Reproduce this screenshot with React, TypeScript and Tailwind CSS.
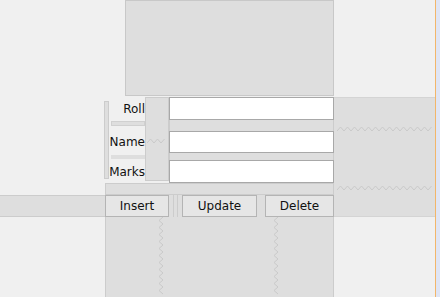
import React from 'react';

const GRAY = 'bg-[#dedede]';

function ZigH({ width }: { width: number }) {
  const pts: string[] = [];
  for (let x = 0, i = 0; x <= width; x += 3.5, i++) pts.push(`${x},${i % 2 ? 1 : 5}`);
  return (
    <svg width={width} height={6} className="block">
      <polyline points={pts.join(' ')} fill="none" stroke="#cacaca" strokeWidth="1" />
    </svg>
  );
}

function ZigV({ height }: { height: number }) {
  const pts: string[] = [];
  for (let y = 0, i = 0; y <= height; y += 3.5, i++) pts.push(`${i % 2 ? 1 : 5},${y}`);
  return (
    <svg width={6} height={height} className="block">
      <polyline points={pts.join(' ')} fill="none" stroke="#cacaca" strokeWidth="1" />
    </svg>
  );
}

function Field() {
  return <div className="h-full bg-white border border-[#a8a8a8]" />;
}

function Btn({ label, w }: { label: string; w: string }) {
  return (
    <div className={`${w} h-full flex items-center justify-center bg-[#e6e6e6] border border-[#b4b4b4]`}>
      {label}
    </div>
  );
}

export default function App() {
  return (
    <div
      className="flex w-[440px] h-[297px] bg-[#f0f0f0] text-[12px] text-[#111] overflow-hidden"
      style={{ fontFamily: '"DejaVu Sans", Tahoma, sans-serif' }}
    >
      <div className="w-[435px] flex flex-col">
        {/* top block */}
        <div className="h-[97px] flex">
          <div className="w-[125px]" />
          <div className={`w-[209px] h-[96px] ${GRAY} border border-[#c8c8c8]`} />
        </div>

        {/* form + buttons */}
        <div className="h-[120px] flex">
          <div className="w-[334px] flex flex-col">
            <div className="h-[86px] flex">
              <div className="w-[104px]" />
              <div className="w-[5px] py-[4px]">
                <div className={`h-full ${GRAY} border border-[#cccccc]`} />
              </div>
              <div className="w-[36px] flex flex-col">
                <div className="h-[23px] flex items-center justify-end">Roll</div>
                <div className="h-[11px] pt-[1px] pl-[2px]">
                  <div className={`h-[5px] ${GRAY} border border-[#d0d0d0]`} />
                </div>
                <div className="h-[22px] flex items-center justify-end">Name</div>
                <div className="h-[7px] pt-[2px] pl-[2px]">
                  <div className={`h-[4px] ${GRAY}`} />
                </div>
                <div className="h-[23px] flex items-center justify-end">Marks</div>
              </div>
              <div className={`w-[24px] h-[84px] ${GRAY} border border-[#cccccc] flex flex-col items-center pt-[40px]`}>
                <ZigH width={20} />
              </div>
              <div className="w-[165px] flex flex-col">
                <div className="h-[23px]"><Field /></div>
                <div className={`h-[11px] ${GRAY} border-x border-[#cccccc]`} />
                <div className="h-[22px]"><Field /></div>
                <div className={`h-[7px] ${GRAY} border-x border-[#cccccc]`} />
                <div className="h-[23px]"><Field /></div>
              </div>
            </div>
            <div className="h-[12px] flex">
              <div className="w-[105px]" />
              <div className={`w-[229px] ${GRAY} border border-[#cccccc]`} />
            </div>
            <div className="h-[22px] flex">
              <div className={`w-[105px] ${GRAY} border-y border-[#cccccc]`} />
              <Btn label="Insert" w="w-[64px]" />
              <div className={`w-[13px] ${GRAY} flex justify-center`}>
                <div className="w-[5px] h-full border-x border-[#cccccc]" />
              </div>
              <Btn label="Update" w="w-[75px]" />
              <div className={`w-[8px] ${GRAY}`} />
              <Btn label="Delete" w="w-[69px]" />
            </div>
          </div>
          <div className={`w-[101px] ${GRAY} border-y border-[#d4d4d4] flex flex-col items-center pt-[28px]`}>
            <ZigH width={95} />
            <div className="h-[53px]" />
            <ZigH width={95} />
          </div>
        </div>

        {/* bottom */}
        <div className="flex-1 flex">
          <div className="w-[105px]" />
          <div className={`w-[229px] ${GRAY} border-x border-[#cccccc] flex`}>
            <div className="w-[52px]" />
            <ZigV height={80} />
            <div className="w-[109px]" />
            <ZigV height={80} />
          </div>
        </div>
      </div>
      <div className="w-px bg-[#f2b66a]" />
      <div className="flex-1 bg-[#dfe5f5]" />
    </div>
  );
}
